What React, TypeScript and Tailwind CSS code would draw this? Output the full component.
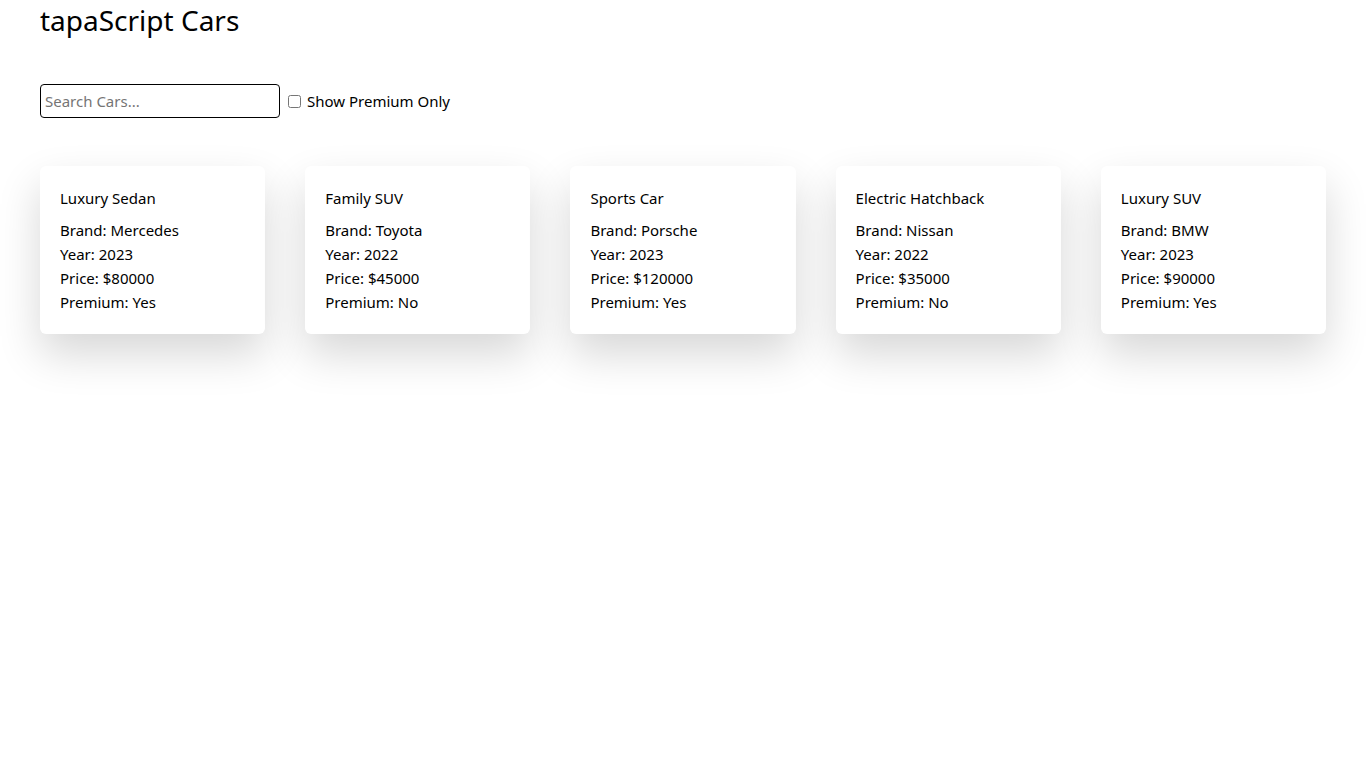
import React from "react";

const cars = [
  { name: "Luxury Sedan", brand: "Mercedes", year: 2023, price: 80000, premium: true },
  { name: "Family SUV", brand: "Toyota", year: 2022, price: 45000, premium: false },
  { name: "Sports Car", brand: "Porsche", year: 2023, price: 120000, premium: true },
  { name: "Electric Hatchback", brand: "Nissan", year: 2022, price: 35000, premium: false },
  { name: "Luxury SUV", brand: "BMW", year: 2023, price: 90000, premium: true },
];

export default function App() {
  return (
    <div className="min-h-screen bg-white px-10 text-black" style={{ fontFamily: '"Noto Sans", "Open Sans", sans-serif' }}>
      <h1 className="text-[28px] leading-[40px] font-normal">tapaScript Cars</h1>
      <div className="mt-[44px] flex items-center">
        <input
          type="text"
          placeholder="Search Cars..."
          className="w-[240px] h-[34px] rounded-[4px] border border-black px-1 text-[15px] placeholder:text-[#757575] outline-none"
        />
        <label className="ml-2 flex items-center text-[15px]">
          <input type="checkbox" className="w-[13px] h-[13px] mr-[6px]" />
          Show Premium Only
        </label>
      </div>
      <div className="mt-[48px] flex gap-10">
        {cars.map((c) => (
          <div
            key={c.name}
            className="flex-1 rounded-[6px] bg-white p-5 shadow-[0_20px_44px_rgba(0,0,0,0.16)] text-[15px] leading-6"
          >
            <div className="mb-2">{c.name}</div>
            <div>Brand: {c.brand}</div>
            <div>Year: {c.year}</div>
            <div>Price: ${c.price}</div>
            <div>Premium: {c.premium ? "Yes" : "No"}</div>
          </div>
        ))}
      </div>
    </div>
  );
}
